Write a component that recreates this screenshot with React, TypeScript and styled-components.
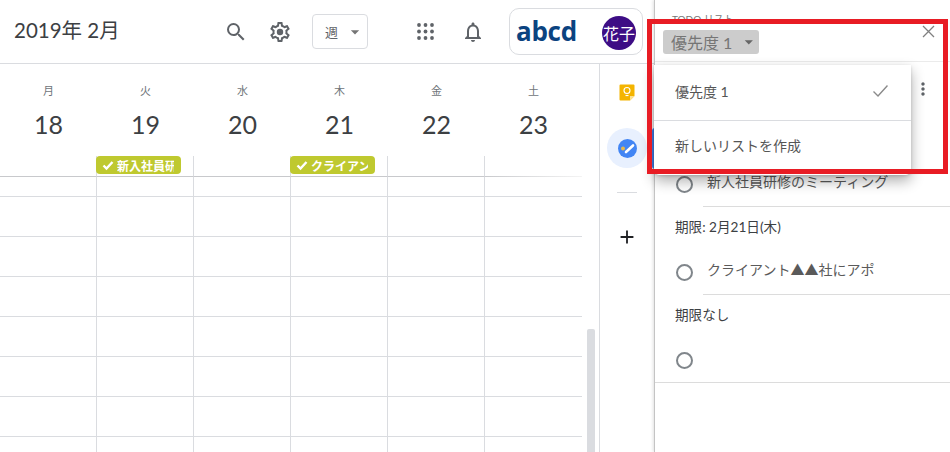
import styled, { createGlobalStyle } from "styled-components";
import { MdOutlineNotifications, MdSearch, MdArrowDropDown, MdMoreVert, MdAdd } from "react-icons/md";

const GlobalStyle = createGlobalStyle`
  html, body { margin: 0; padding: 0; background: #fff; }
  body { font-family: "Lato", "Noto Sans CJK JP", sans-serif; color: #3c4043; }
`;

const Page = styled.div`
  position: relative;
  display: flex;
  width: 950px;
  height: 452px;
  overflow: hidden;
  background: #fff;
`;

const Left = styled.div`
  display: flex;
  flex-direction: column;
  width: 654px;
  flex-shrink: 0;
`;

const Header = styled.header`
  display: flex;
  align-items: center;
  height: 63px;
  padding-left: 14px;
  border-bottom: 1px solid #dadce0;
  box-sizing: content-box;
`;

const Title = styled.h1`
  margin: 0;
  flex: 1;
  font-size: 20.5px;
  font-weight: 400;
  color: #3c4043;
  padding-bottom: 5px;
`;

const IconBtn = styled.div<{ $w: number }>`
  display: flex;
  align-items: center;
  justify-content: center;
  width: ${(p) => p.$w}px;
  color: #5f6368;
`;

const ViewSelect = styled.div`
  display: flex;
  align-items: center;
  justify-content: space-between;
  box-sizing: border-box;
  width: 56px;
  height: 35px;
  margin: 0 32px 0 10px;
  padding: 0 2px 0 12px;
  border: 1px solid #dadce0;
  border-radius: 4px;
  font-size: 13px;
  color: #5f6368;
`;

const AccountCard = styled.div`
  display: flex;
  align-items: center;
  justify-content: space-between;
  box-sizing: border-box;
  width: 134px;
  height: 47px;
  margin: 0 11px 1px 13px;
  padding: 0 6px 0 6px;
  border: 1px solid #dadce0;
  border-radius: 10px;
`;

const Logo = styled.span`
  font-family: "Open Sans", sans-serif;
  font-size: 26px;
  font-weight: 700;
  letter-spacing: -0.3px;
  color: #0b4380;
`;

const Avatar = styled.span`
  display: flex;
  align-items: center;
  justify-content: center;
  width: 34px;
  height: 34px;
  margin-top: 3px;
  border-radius: 50%;
  background: #3d0d85;
  color: #fff;
  font-size: 16px;
  white-space: nowrap;
  overflow: hidden;
`;

const Body = styled.div`
  display: flex;
  flex: 1;
  min-height: 0;
`;

const Calendar = styled.main`
  position: relative;
  width: 599px;
  flex-shrink: 0;
  overflow: hidden;
`;

const DayHeads = styled.div`
  display: grid;
  grid-template-columns: repeat(6, 97px);
  height: 92px;
`;

const DayHead = styled.div`
  display: flex;
  flex-direction: column;
  align-items: center;
  padding-top: 20px;
`;

const Weekday = styled.span`
  font-size: 11px;
  line-height: 14px;
  color: #70757a;
`;

const DayNum = styled.span`
  margin-top: 10px;
  font-size: 25px;
  line-height: 32px;
  color: #3c4043;
`;

const Row = styled.div<{ $h: number }>`
  display: grid;
  grid-template-columns: repeat(6, 97px);
  height: ${(p) => p.$h}px;
  box-sizing: border-box;
`;

const Cell = styled.div<{ $last?: boolean; $top?: boolean }>`
  box-sizing: border-box;
  border-right: ${(p) => (p.$last ? "none" : "1px solid #dadce0")};
  border-bottom: 1px solid ${(p) => (p.$top ? "#c8c9cc" : "#dadce0")};
  ${(p) =>
    p.$top && p.$last
      ? "border-image: linear-gradient(to right, #c8c9cc, #f4f4f4) 1;"
      : ""}
  min-width: 0;
`;

const Chip = styled.div`
  box-sizing: border-box;
  display: flex;
  align-items: center;
  gap: 3px;
  width: 85px;
  height: 18px;
  margin-left: -1px;
  padding: 0 7px 0 6px;
  border-radius: 4px;
  background: #bfc92f;
  color: #fff;
  font-size: 12px;
  font-weight: 700;
`;

const ChipText = styled.span`
  flex: 1;
  min-width: 0;
  white-space: nowrap;
  overflow: hidden;
`;

const ChipCheck = styled.svg`
  flex-shrink: 0;
  width: 12px;
  height: 12px;
  fill: none;
  stroke: #fff;
  stroke-width: 2.4;
`;

const ScrollThumb = styled.div`
  position: absolute;
  right: 4px;
  top: 265px;
  width: 8px;
  height: 140px;
  background: #dadce0;
  border-radius: 2px 2px 0 0;
`;

const SideRail = styled.aside`
  position: relative;
  display: flex;
  flex-direction: column;
  align-items: center;
  width: 55px;
  box-sizing: border-box;
  padding-top: 8px;
  border-left: 1px solid #dadce0;
`;

const RailIcon = styled.div`
  display: flex;
  align-items: center;
  justify-content: center;
  width: 40px;
  height: 40px;
  border-radius: 50%;
  margin-bottom: 16px;
`;

const ActiveRailIcon = styled(RailIcon)`
  background: #e8f0fe;
  margin-bottom: 24px;
`;

const RailDivider = styled.div`
  width: 20px;
  height: 1px;
  background: #dadce0;
  margin-bottom: 33px;
`;

const ActiveBar = styled.div`
  position: absolute;
  left: 52px;
  top: 64px;
  width: 3px;
  height: 41px;
  border-radius: 3px 0 0 3px;
  background: #4285f4;
`;

const Panel = styled.section`
  position: relative;
  flex: 1;
  border-left: 1px solid #c4c4c4;
  box-shadow: -1px 0 3px rgba(0, 0, 0, 0.12);
  background: #fff;
`;

const PanelHead = styled.div`
  height: 62px;
  box-sizing: border-box;
  padding: 13px 0 0 8px;
  border-bottom: 1px solid #ebebeb;
`;

const PanelLabel = styled.div`
  padding-left: 9px;
  font-size: 10px;
  line-height: 13px;
  color: #777;
  margin-bottom: 4px;
`;

const ListChip = styled.div`
  display: inline-flex;
  align-items: center;
  box-sizing: border-box;
  width: 96px;
  height: 24px;
  padding-left: 8px;
  gap: 7px;
  border-radius: 3px;
  background: #cccccc;
  color: #757575;
  font-size: 16px;
  white-space: nowrap;
`;

const CloseBtn = styled.svg`
  position: absolute;
  right: 15px;
  top: 25px;
  width: 13px;
  height: 13px;
  stroke: #808080;
  stroke-width: 1.3;
`;

const FirstTaskRow = styled.div`
  display: flex;
  height: 107px;
  box-sizing: border-box;
  padding: 17px 0 0 258px;
  color: #5f6368;
`;

const Task = styled.div<{ $full?: boolean }>`
  display: flex;
  align-items: flex-start;
  height: 38px;
  padding-left: 21px;
  box-sizing: border-box;
  ${(p) => (p.$full ? "border-bottom: 1px solid #dcdcdc;" : "")}
`;

const Radio = styled.span`
  box-sizing: border-box;
  flex-shrink: 0;
  width: 17px;
  height: 17px;
  margin-top: 7px;
  border: 2px solid #80868b;
  border-radius: 50%;
`;

const TaskText = styled.div`
  flex: 1;
  margin-left: 10px;
  height: 100%;
  box-sizing: border-box;
  padding: 3px 0 0 4px;
  font-size: 14px;
  line-height: 20px;
  color: #5a5a5a;
  white-space: nowrap;
  border-bottom: 1px solid #dcdcdc;
`;

const Due = styled.div`
  height: 50px;
  padding: 11px 0 0 20px;
  box-sizing: border-box;
  font-size: 13.6px;
  line-height: 18px;
  color: #3c4043;
`;

const Menu = styled.div`
  position: absolute;
  left: 654px;
  top: 65px;
  z-index: 2;
  width: 257px;
  height: 110px;
  background: #fff;
  border-radius: 0 0 5px 5px;
  box-shadow: 0 6px 14px rgba(0, 0, 0, 0.32), 0 1px 3px rgba(0, 0, 0, 0.15);
`;

const MenuItem = styled.div<{ $line?: boolean }>`
  display: flex;
  align-items: center;
  justify-content: space-between;
  box-sizing: border-box;
  height: ${(p) => (p.$line ? 56 : 54)}px;
  padding: 0 23px ${(p) => (p.$line ? 4 : 6)}px 21px;
  font-size: 14px;
  color: #555;
  ${(p) => (p.$line ? "border-bottom: 1px solid #dadce0;" : "")}
`;

const MenuCheck = styled.svg`
  width: 15px;
  height: 12px;
  fill: none;
  stroke: #8a8a8a;
  stroke-width: 1.4;
`;

const RedFrame = styled.div`
  position: absolute;
  left: 647px;
  top: 19px;
  z-index: 3;
  box-sizing: border-box;
  width: 301px;
  height: 155px;
  border: 5px solid #e81c24;
`;

const days = [
  ["月", "18"],
  ["火", "19"],
  ["水", "20"],
  ["木", "21"],
  ["金", "22"],
  ["土", "23"],
];

const chips: Record<number, string> = {
  1: "新入社員研修のミーティング",
  3: "クライアント▲▲社にアポ",
};

function GearIcon() {
  return (
    <svg width="24" height="24" viewBox="0 0 24 24" fill="#5f6368">
      <path d="M19.43 12.98c.04-.32.07-.64.07-.98 0-.34-.03-.66-.07-.98l2.11-1.65c.19-.15.24-.42.12-.64l-2-3.46c-.09-.16-.26-.25-.44-.25-.06 0-.12.01-.17.03l-2.49 1c-.52-.4-1.08-.73-1.69-.98l-.38-2.65C14.46 2.18 14.25 2 14 2h-4c-.25 0-.46.18-.49.42l-.38 2.65c-.61.25-1.17.59-1.69.98l-2.49-1c-.06-.02-.12-.03-.18-.03-.17 0-.34.09-.43.25l-2 3.46c-.13.22-.07.49.12.64l2.11 1.65c-.04.32-.07.65-.07.98 0 .33.03.66.07.98l-2.11 1.65c-.19.15-.24.42-.12.64l2 3.46c.09.16.26.25.44.25.06 0 .12-.01.17-.03l2.49-1c.52.4 1.08.73 1.69.98l.38 2.65c.03.24.24.42.49.42h4c.25 0 .46-.18.49-.42l.38-2.65c.61-.25 1.17-.59 1.69-.98l2.49 1c.06.02.12.03.18.03.17 0 .34-.09.43-.25l2-3.46c.12-.22.07-.49-.12-.64l-2.11-1.65zm-1.98-1.71c.04.31.05.52.05.73 0 .21-.02.43-.05.73l-.14 1.13.89.7 1.08.84-.7 1.21-1.27-.51-1.04-.42-.9.68c-.43.32-.84.56-1.25.73l-1.06.43-.16 1.13-.2 1.35h-1.4l-.19-1.35-.16-1.13-1.06-.43c-.43-.18-.83-.41-1.23-.71l-.91-.7-1.06.43-1.27.51-.7-1.21 1.08-.84.89-.7-.14-1.13c-.03-.31-.05-.54-.05-.74s.02-.43.05-.73l.14-1.13-.89-.7-1.08-.84.7-1.21 1.27.51 1.04.42.9-.68c.43-.32.84-.56 1.25-.73l1.06-.43.16-1.13.2-1.35h1.39l.19 1.35.16 1.13 1.06.43c.43.18.83.41 1.23.71l.91.7 1.06-.43 1.27-.51.7 1.21-1.07.85-.89.7.14 1.13z" />
      <circle cx="12" cy="12" r="3.2" />
    </svg>
  );
}

function AppsIcon() {
  const spots = [2, 8.5, 15];
  return (
    <svg width="17" height="17" viewBox="0 0 17 17" fill="#5f6368">
      {spots.map((y) =>
        spots.map((x) => <circle key={`${x}-${y}`} cx={x} cy={y} r="1.9" />)
      )}
    </svg>
  );
}

function KeepIcon() {
  return (
    <svg width="16" height="17" viewBox="0 0 16 17">
      <path d="M1.5 0.5h13a1 1 0 0 1 1 1V12l-4.500 4.500H1.500a1 1 0 0 1-1-1V1.500a1 1 0 0 1 1-1z" fill="#f4b400" />
      <path d="M15.500 12h-4.500v4.500z" fill="#fde293" />
      <circle cx="8" cy="6.500" r="3" fill="none" stroke="#fff" strokeWidth="1.100" />
      <path d="M6.500 11.500h3" stroke="#fff" strokeWidth="1.200" />
    </svg>
  );
}

function TasksIcon() {
  return (
    <svg width="19" height="19" viewBox="0 0 19 19">
      <circle cx="9.500" cy="9.500" r="9.500" fill="#4285f4" />
      <path d="M8 13L15 6.500" stroke="#fff" strokeWidth="2.600" strokeLinecap="round" />
      <circle cx="5" cy="9.500" r="2" fill="#e8b84a" />
    </svg>
  );
}

export default function App() {
  return (
    <Page>
      <GlobalStyle />
      <Left>
        <Header>
          <Title>2019年 2月</Title>
          <IconBtn $w={44}>
            <MdSearch size={24} />
          </IconBtn>
          <IconBtn $w={44}>
            <GearIcon />
          </IconBtn>
          <ViewSelect>
            週
            <MdArrowDropDown size={20} color="#757575" />
          </ViewSelect>
          <IconBtn $w={50}>
            <AppsIcon />
          </IconBtn>
          <IconBtn $w={46}>
            <MdOutlineNotifications size={24} />
          </IconBtn>
          <AccountCard>
            <Logo>abcd</Logo>
            <Avatar>花子</Avatar>
          </AccountCard>
        </Header>
        <Body>
          <Calendar>
            <DayHeads>
              {days.map(([w, d]) => (
                <DayHead key={d}>
                  <Weekday>{w}</Weekday>
                  <DayNum>{d}</DayNum>
                </DayHead>
              ))}
            </DayHeads>
            <Row $h={21}>
              {days.map(([, d], i) => (
                <Cell key={d} $top $last={i === 5}>
                  {chips[i] && (
                    <Chip>
                      <ChipCheck viewBox="0 0 12 12">
                        <path d="M1.500 6.500L4.500 9.500L10.500 3" />
                      </ChipCheck>
                      <ChipText>{chips[i]}</ChipText>
                    </Chip>
                  )}
                </Cell>
              ))}
            </Row>
            {[20, 40, 40, 40, 40, 40, 40, 40].map((h, r) => (
              <Row key={r} $h={h}>
                {days.map(([, d], i) => (
                  <Cell key={d} $last={i === 5} />
                ))}
              </Row>
            ))}
            <ScrollThumb />
          </Calendar>
          <SideRail>
            <RailIcon>
              <KeepIcon />
            </RailIcon>
            <ActiveRailIcon>
              <TasksIcon />
            </ActiveRailIcon>
            <RailDivider />
            <MdAdd size={22} color="#202124" />
            <ActiveBar />
          </SideRail>
        </Body>
      </Left>
      <Panel>
        <PanelHead>
          <PanelLabel>TODO リスト</PanelLabel>
          <ListChip>
            優先度 1
            <MdArrowDropDown size={20} color="#666" />
          </ListChip>
          <CloseBtn viewBox="0 0 13 13">
            <path d="M1 1L12 12M12 1L1 12" />
          </CloseBtn>
        </PanelHead>
        <FirstTaskRow>
          <MdMoreVert size={20} />
        </FirstTaskRow>
        <Task>
          <Radio />
          <TaskText>新人社員研修のミーティング</TaskText>
        </Task>
        <Due>期限: 2月21日(木)</Due>
        <Task>
          <Radio />
          <TaskText>クライアント▲▲社にアポ</TaskText>
        </Task>
        <Due>期限なし</Due>
        <Task $full>
          <Radio />
        </Task>
      </Panel>
      <Menu>
        <MenuItem $line>
          優先度 1
          <MenuCheck viewBox="0 0 15 12">
            <path d="M0.500 6.500L5 11L14.500 0.500" />
          </MenuCheck>
        </MenuItem>
        <MenuItem>新しいリストを作成</MenuItem>
      </Menu>
      <RedFrame />
    </Page>
  );
}
